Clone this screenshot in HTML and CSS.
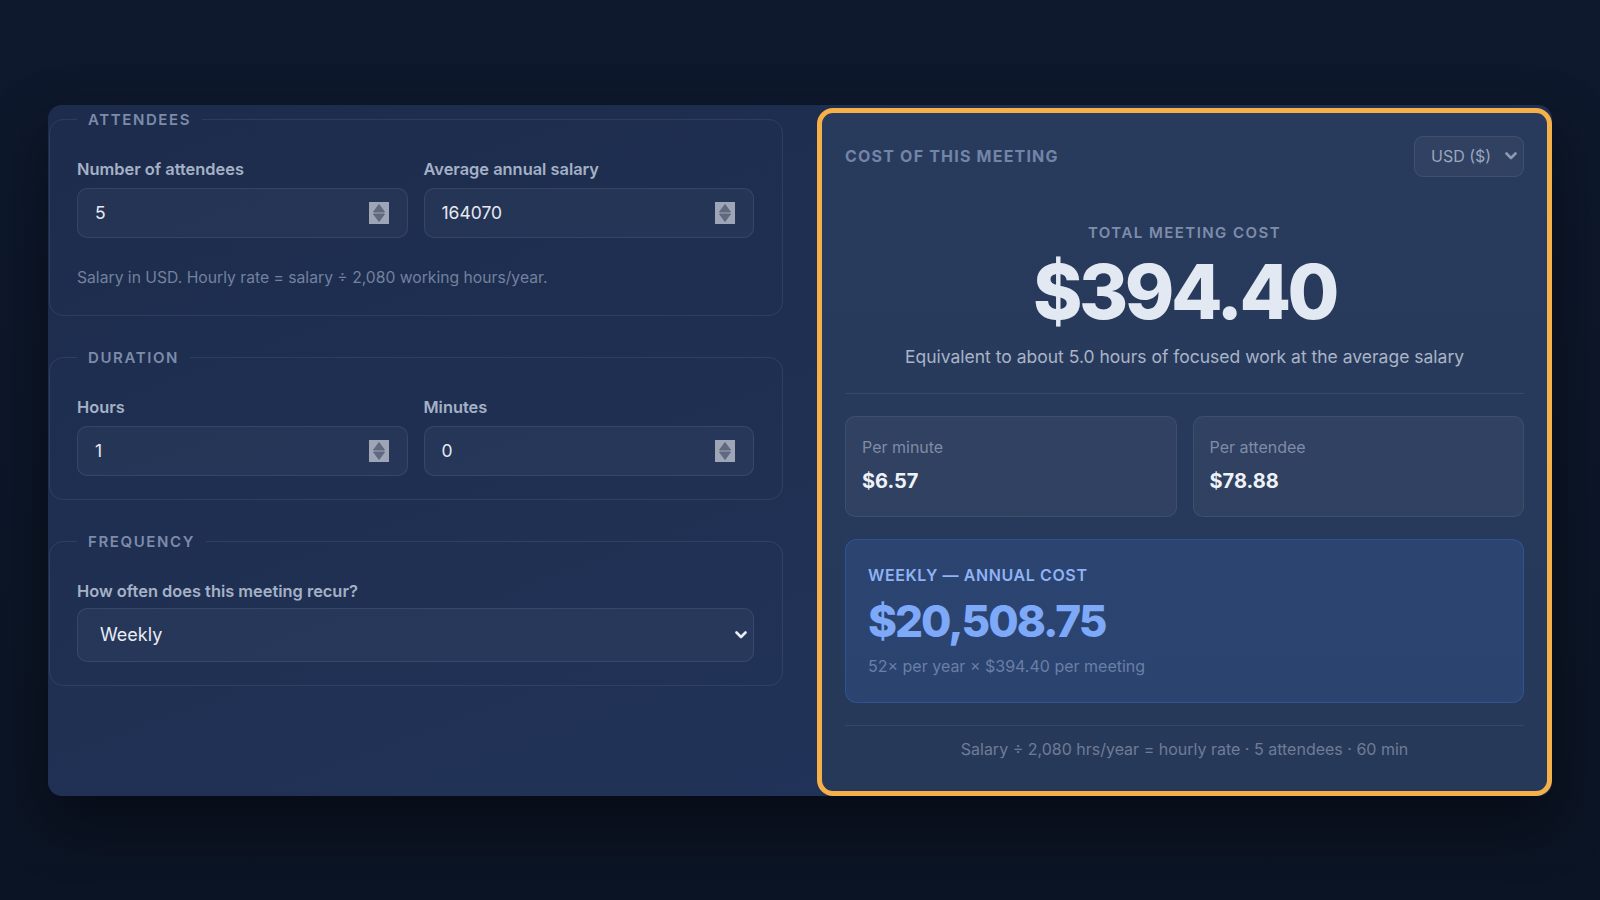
FILE: index.html
```html
<!DOCTYPE html>
<html lang="en">
<head>
<meta charset="utf-8">
<title>Meeting Cost Calculator</title>
<link rel="stylesheet" href="styles.css">
</head>
<body>
<main class="app">
  <section class="inputs">
    <fieldset class="group">
      <legend>Attendees</legend>
      <div class="row">
        <div class="field">
          <label class="label" for="att">Number of attendees</label>
          <div class="num">
            <input id="att" type="text" value="5">
            <svg class="spin" width="20" height="22" viewBox="0 0 20 22"><rect width="20" height="22" fill="#9da5b6"/><path d="M10 2.5 L15.5 10 H4.5 Z" fill="#606a7f" stroke="#606a7f" stroke-width="1" stroke-linejoin="round"/><path d="M10 19.5 L15.5 12 H4.5 Z" fill="#606a7f" stroke="#606a7f" stroke-width="1" stroke-linejoin="round"/></svg>
          </div>
        </div>
        <div class="field">
          <label class="label" for="sal">Average annual salary</label>
          <div class="num">
            <input id="sal" type="text" value="164070">
            <svg class="spin" width="20" height="22" viewBox="0 0 20 22"><rect width="20" height="22" fill="#9da5b6"/><path d="M10 2.5 L15.5 10 H4.5 Z" fill="#606a7f" stroke="#606a7f" stroke-width="1" stroke-linejoin="round"/><path d="M10 19.5 L15.5 12 H4.5 Z" fill="#606a7f" stroke="#606a7f" stroke-width="1" stroke-linejoin="round"/></svg>
          </div>
        </div>
      </div>
      <p class="hint">Salary in USD. Hourly rate = salary ÷ 2,080 working hours/year.</p>
    </fieldset>

    <fieldset class="group">
      <legend>Duration</legend>
      <div class="row">
        <div class="field">
          <label class="label" for="hrs">Hours</label>
          <div class="num">
            <input id="hrs" type="text" value="1">
            <svg class="spin" width="20" height="22" viewBox="0 0 20 22"><rect width="20" height="22" fill="#9da5b6"/><path d="M10 2.5 L15.5 10 H4.5 Z" fill="#606a7f" stroke="#606a7f" stroke-width="1" stroke-linejoin="round"/><path d="M10 19.5 L15.5 12 H4.5 Z" fill="#606a7f" stroke="#606a7f" stroke-width="1" stroke-linejoin="round"/></svg>
          </div>
        </div>
        <div class="field">
          <label class="label" for="min">Minutes</label>
          <div class="num">
            <input id="min" type="text" value="0">
            <svg class="spin" width="20" height="22" viewBox="0 0 20 22"><rect width="20" height="22" fill="#9da5b6"/><path d="M10 2.5 L15.5 10 H4.5 Z" fill="#606a7f" stroke="#606a7f" stroke-width="1" stroke-linejoin="round"/><path d="M10 19.5 L15.5 12 H4.5 Z" fill="#606a7f" stroke="#606a7f" stroke-width="1" stroke-linejoin="round"/></svg>
          </div>
        </div>
      </div>
    </fieldset>

    <fieldset class="group">
      <legend>Frequency</legend>
      <label class="label label-tight" for="freq">How often does this meeting recur?</label>
      <div class="select big-select">
        <select id="freq">
          <option>One-time</option>
          <option>Daily</option>
          <option selected>Weekly</option>
          <option>Bi-weekly</option>
          <option>Monthly</option>
        </select>
        <svg class="chev" width="12" height="8" viewBox="0 0 12 8"><path d="M1.5 1.5 L6 6 L10.5 1.5" fill="none" stroke="#e8edf5" stroke-width="2.6" stroke-linecap="round" stroke-linejoin="round"/></svg>
      </div>
    </fieldset>
  </section>

  <section class="result">
    <header class="result-head">
      <h2 class="result-title">Cost of this meeting</h2>
      <div class="select currency">
        <select aria-label="Currency">
          <option selected>USD ($)</option>
          <option>EUR (€)</option>
          <option>GBP (£)</option>
        </select>
        <svg class="chev" width="12" height="8" viewBox="0 0 12 8"><path d="M1.5 1.5 L6 6 L10.5 1.5" fill="none" stroke="#8e9ab2" stroke-width="2.6" stroke-linecap="round" stroke-linejoin="round"/></svg>
      </div>
    </header>

    <div class="hero">
      <div class="hero-label">Total meeting cost</div>
      <div class="hero-value">$394.40</div>
      <p class="hero-sub">Equivalent to about 5.0 hours of focused work at the average salary</p>
    </div>

    <div class="stats">
      <div class="stat">
        <div class="stat-label">Per minute</div>
        <div class="stat-value">$6.57</div>
      </div>
      <div class="stat">
        <div class="stat-label">Per attendee</div>
        <div class="stat-value">$78.88</div>
      </div>
    </div>

    <div class="annual">
      <div class="annual-label">Weekly — annual cost</div>
      <div class="annual-value">$20,508.75</div>
      <div class="annual-sub">52× per year × $394.40 per meeting</div>
    </div>

    <p class="foot">Salary ÷ 2,080 hrs/year = hourly rate · 5 attendees · 60 min</p>
  </section>
</main>
</body>
</html>
```

FILE: styles.css
```css
* { box-sizing: border-box; }

html, body { height: 100%; }

body {
  margin: 0;
  min-height: 100vh;
  display: flex;
  align-items: center;
  justify-content: center;
  background: linear-gradient(180deg, #0e192d 0%, #0b1424 100%);
  font-family: "Inter", "Noto Sans", sans-serif;
  color: #e2e8f0;
}

.app {
  width: 1504px;
  height: 691px;
  display: grid;
  grid-template-columns: 769px 735px;
  border-radius: 14px;
  background: linear-gradient(160deg, #1d2c4c 0%, #203155 60%, #22355b 100%);
  box-shadow: 0 24px 60px rgba(0, 0, 0, 0.45);
}

/* ---------- left column ---------- */

.inputs {
  padding: 5px 34px 0 1px;
  display: flex;
  flex-direction: column;
  gap: 32px;
}

.group {
  margin: 0;
  min-width: 0;
  border: 1px solid rgba(148, 163, 184, 0.14);
  border-radius: 14px;
  padding: 28px 28px 23px 27px;
}

.group legend {
  padding: 0 11px;
  font-size: 15px;
  line-height: 20px;
  font-weight: 600;
  letter-spacing: 1.6px;
  text-transform: uppercase;
  color: #7d8bab;
}

.row {
  display: grid;
  grid-template-columns: 1fr 1fr;
  gap: 16px;
}

.field { min-width: 0; }

.label {
  display: block;
  font-size: 16.4px;
  line-height: 22px;
  font-weight: 600;
  color: #a5b1c6;
  margin-bottom: 8px;
}

.label-tight { margin-bottom: 6px; }

.num {
  display: flex;
  align-items: center;
  height: 50px;
  padding: 0 18px 0 17px;
  border: 1px solid rgba(148, 163, 184, 0.16);
  border-radius: 10px;
  background: rgba(255, 255, 255, 0.035);
}

.num input {
  flex: 1;
  min-width: 0;
  border: 0;
  padding: 0;
  background: transparent;
  color: #e5eaf2;
  font-family: inherit;
  font-size: 17.5px;
  outline: none;
}

.spin { flex: none; display: block; }

.hint {
  margin: 28px 0 2px;
  font-size: 15.7px;
  line-height: 24px;
  color: #73819e;
}

.select {
  display: flex;
  align-items: center;
  border: 1px solid rgba(148, 163, 184, 0.16);
  background: rgba(255, 255, 255, 0.035);
}

.select select {
  flex: 1;
  min-width: 0;
  appearance: none;
  -webkit-appearance: none;
  border: 0;
  padding: 0;
  background: transparent;
  font-family: inherit;
  outline: none;
}

.select select option { background: #1e2d4d; color: #e2e8f0; }

.chev { flex: none; display: block; }

.big-select {
  height: 54px;
  border-radius: 10px;
  padding: 0 6px 0 22px;
}

.big-select select {
  font-size: 18px;
  color: #e8edf5;
}

/* ---------- right column ---------- */

.result {
  margin-top: 3px;
  border: 5px solid #f5b04a;
  border-radius: 16px;
  background: linear-gradient(180deg, #293b5d 0%, #273959 100%);
  padding: 23px;
  display: flex;
  flex-direction: column;
}

.result-head {
  display: flex;
  align-items: center;
  justify-content: space-between;
}

.result-title {
  margin: 0;
  font-size: 16px;
  line-height: 22px;
  font-weight: 700;
  letter-spacing: 1.2px;
  text-transform: uppercase;
  color: #7285a8;
}

.currency {
  width: 110px;
  height: 41px;
  border-radius: 9px;
  padding: 0 6px 0 16px;
}

.currency select {
  font-size: 16px;
  color: #9aa6bd;
}

.hero {
  padding: 46px 0 24px;
  text-align: center;
  border-bottom: 1px solid rgba(148, 163, 184, 0.14);
}

.hero-label {
  font-size: 15px;
  line-height: 20px;
  font-weight: 600;
  letter-spacing: 1.45px;
  text-transform: uppercase;
  color: #7f8dab;
}

.hero-value {
  margin-top: 10px;
  font-size: 75px;
  line-height: 78px;
  font-weight: 800;
  letter-spacing: -3.5px;
  color: #e3e9f2;
}

.hero-sub {
  margin: 14px 0 0;
  font-size: 17.5px;
  line-height: 24px;
  color: #a9b4c8;
}

.stats {
  margin-top: 22px;
  display: grid;
  grid-template-columns: 1fr 1fr;
  gap: 16px;
}

.stat {
  padding: 20px 16px 21px;
  border: 1px solid rgba(148, 163, 184, 0.14);
  border-radius: 10px;
  background: rgba(255, 255, 255, 0.04);
}

.stat-label {
  font-size: 16px;
  line-height: 20px;
  color: #7f8ca6;
}

.stat-value {
  margin-top: 10px;
  font-size: 20px;
  line-height: 28px;
  font-weight: 700;
  color: #eef2f8;
}

.annual {
  margin-top: 22px;
  padding: 24px 22px 26px;
  border: 1px solid rgba(59, 130, 246, 0.28);
  border-radius: 12px;
  background: rgba(59, 110, 200, 0.2);
}

.annual-label {
  font-size: 16px;
  line-height: 22px;
  font-weight: 600;
  letter-spacing: 0.6px;
  text-transform: uppercase;
  color: #8fb3f5;
}

.annual-value {
  margin-top: 9px;
  font-size: 44px;
  line-height: 52px;
  font-weight: 800;
  letter-spacing: -2px;
  color: #7ea9f8;
}

.annual-sub {
  margin-top: 9px;
  font-size: 16px;
  line-height: 20px;
  color: #6a7fa6;
}

.foot {
  margin: 22px 0 0;
  padding-top: 12px;
  border-top: 1px solid rgba(148, 163, 184, 0.14);
  text-align: center;
  font-size: 16px;
  line-height: 22px;
  color: #6f7c96;
}
```
